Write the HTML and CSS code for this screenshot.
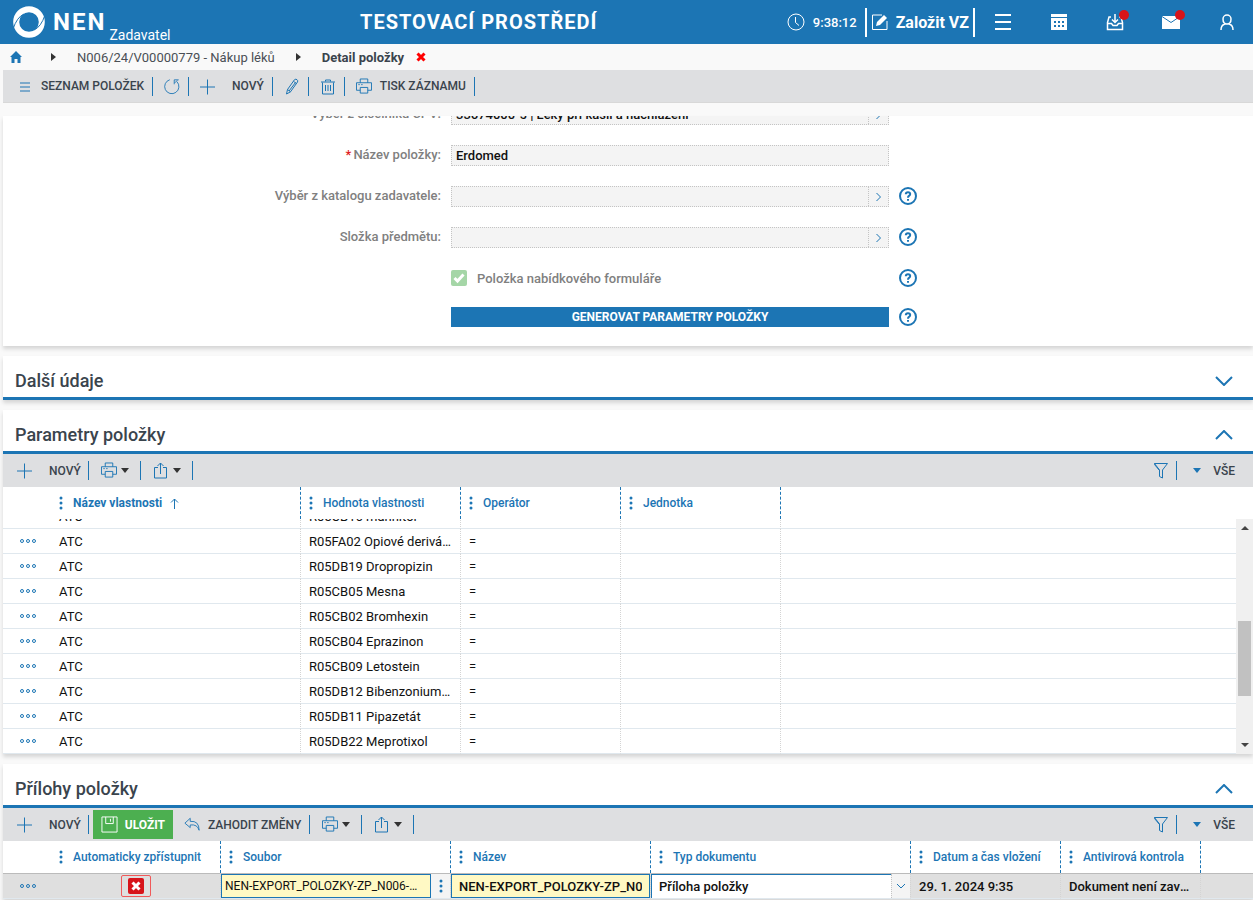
FILE: index.html
```html
<!DOCTYPE html>
<html lang="cs">
<head>
    <meta charset="UTF-8">
    <meta name="viewport" content="width=device-width, initial-scale=1.0">
    <title>NEN - Detail položky</title>
    <link rel="stylesheet" href="styles.css">
</head>
<body>
    <svg class="sprite" aria-hidden="true">
        <symbol id="i-list" viewBox="0 0 16 16"><path d="M3 4.500h10M3 8.500h10M3 12.500h10"/></symbol>
        <symbol id="i-refresh" viewBox="0 0 18 18"><path d="M6.500 1.400A8 8 0 1 0 14.500 3.500M16.500 1.500H11.500V6.500M15 2L12 5"/></symbol>
        <symbol id="i-plus" viewBox="0 0 16 16"><path d="M7.500 1v15M0 8.500h15"/></symbol>
        <symbol id="i-pencil" viewBox="0 0 16 16"><path d="M2.500 15.500l1-4.500L10.500 1.200q1.400-1 2.500 0 1.300 1 .5 2.300L6.500 13.300zM9.500 2.800l2.800 2.200M3.500 11l3 2.300M11.500 4L5 12.500"/></symbol>
        <symbol id="i-trash" viewBox="0 0 16 16"><path d="M1 3.500h14M5.500 3V1.500h5V3M2.500 4v11.500h11V4M5.500 6.500v6M8 6.500v6M10.500 6.500v6"/></symbol>
        <symbol id="i-print" viewBox="0 0 17 17"><path d="M4.500 4.500v-4h8v4M4.500 12.500h-4v-8h16v8h-4M4.500 9.500h8v6h-8zM2.500 6.500h1.500M5.500 6.500h1.500"/></symbol>
        <symbol id="i-share" viewBox="0 0 16 17"><path d="M5 5.500H1.500v10.500h12V5.500H10M7.500 12V1M4.500 4l3-3 3 3"/></symbol>
        <symbol id="i-filter" viewBox="0 0 16 17"><path d="M1.500 1.500h13L9.500 8v8l-3-1.500V8zM1.500 1.500v1l5 6"/></symbol>
        <symbol id="i-caret" viewBox="0 0 8 5"><path d="M0 0h8L4 5z"/></symbol>
        <symbol id="i-down" viewBox="0 0 18 10"><path d="M1 1l8 8 8-8"/></symbol>
        <symbol id="i-up" viewBox="0 0 18 10"><path d="M1 9l8-8 8 8"/></symbol>
        <symbol id="i-dots" viewBox="0 0 4 14"><circle cx="2" cy="2" r="1.500"/><circle cx="2" cy="7" r="1.500"/><circle cx="2" cy="12" r="1.500"/></symbol>
        <symbol id="i-more" viewBox="0 0 18 6"><circle cx="3" cy="3" r="1.500"/><circle cx="9" cy="3" r="1.500"/><circle cx="15" cy="3" r="1.500"/></symbol>
        <symbol id="i-help" viewBox="0 0 18 18"><circle cx="9" cy="9" r="8"/><path d="M6.800 7.200Q6.800 5.200 9 5.200T11.200 7.100Q11.200 8.200 10 8.900 9 9.500 9 10.700M9 12v1.700"/></symbol>
        <symbol id="i-next" viewBox="0 0 8 10"><path d="M1.500 1l4 4-4 4"/></symbol>
    </svg>

    <header class="topbar">
        <a class="logo" href="#">
            <svg width="34" height="34" viewBox="0 0 34 34"><circle class="ring" cx="17" cy="17" r="12.800"/><path class="swoosh" d="M1 24Q5 12 12 9M33 10Q29 22 22 25"/></svg>
            <strong>NEN</strong>
            <span>Zadavatel</span>
        </a>
        <div class="env">TESTOVACÍ PROSTŘEDÍ</div>
        <div class="clock">
            <svg width="18" height="18" viewBox="0 0 18 18"><circle cx="9" cy="9" r="8"/><path d="M8.500 4v5.500l3.500 3"/></svg>
            <span>9:38:12</span>
        </div>
        <button class="create" type="button">
            <svg width="18" height="18" viewBox="0 0 18 18"><path d="M11 2H1.500v14.500H16V8"/><path class="solid" d="M5 13l1-4 7-7 3 3-7 7z"/></svg>
            Založit VZ
        </button>
        <nav class="top-icons">
            <button type="button" aria-label="Menu"><svg width="18" height="18" viewBox="0 0 18 18"><path class="thick" d="M1 2h16M1 9h16M1 16h16"/></svg></button>
            <button type="button" aria-label="Kalendář"><svg width="18" height="18" viewBox="0 0 18 18"><path class="solid" d="M1 1h16v3H1zM1 5h16v12H1z"/><path class="hole" d="M4 8h2v2H4zM8 8h2v2H8zM12 8h2v2h-2zM4 12h2v2H4zM8 12h2v2H8zM12 12h2v2h-2z"/></svg></button>
            <button type="button" aria-label="Doručené"><svg width="18" height="18" viewBox="0 0 18 18"><path class="medium" d="M5 4H3L1.500 9.500v7h15v-7L15 4h-2M1.500 10.500h4l1.500 2h4l1.500-2h4M9 1v8M6 6.500l3 3 3-3"/></svg><i class="badge"></i></button>
            <button type="button" aria-label="Zprávy"><svg width="18" height="18" viewBox="0 0 18 18"><path class="solid" d="M0 3h18v13H0z"/><path class="fold" d="M0 3.500l9 6 9-6"/></svg><i class="badge"></i></button>
            <button type="button" aria-label="Uživatel"><svg width="18" height="18" viewBox="0 0 18 18"><path class="medium" d="M9 2a4 4 0 0 1 4 4q0 5-4 5T5 6a4 4 0 0 1 4-4zM3 17q0-5 4-6M15 17q0-5-4-6"/></svg></button>
        </nav>
    </header>

    <nav class="crumbs">
        <a class="home" href="#" aria-label="Domů"><svg width="12" height="12" viewBox="0 0 12 12"><path d="M6 0l6 6h-1.500v6H7.500V8h-3v4h-3V6H0z"/></svg></a>
        <svg class="crumb-arrow" width="5" height="8" viewBox="0 0 5 8"><path d="M0 0l5 4-5 4z"/></svg>
        <a href="#">N006/24/V00000779 - Nákup léků</a>
        <svg class="crumb-arrow" width="5" height="8" viewBox="0 0 5 8"><path d="M0 0l5 4-5 4z"/></svg>
        <strong>Detail položky</strong>
        <button class="close" type="button" aria-label="Zavřít"><svg width="10" height="10" viewBox="0 0 10 10"><path d="M1.500 1.500l7 7M8.500 1.500l-7 7"/></svg></button>
    </nav>

    <main>
        <div class="toolbar main-toolbar">
            <button type="button" class="near"><svg class="icon"><use href="#i-list"/></svg>SEZNAM POLOŽEK</button>
            <button type="button" aria-label="Obnovit"><svg class="icon"><use href="#i-refresh"/></svg></button>
            <button type="button"><svg class="icon"><use href="#i-plus"/></svg>NOVÝ</button>
            <button type="button" aria-label="Upravit"><svg class="icon"><use href="#i-pencil"/></svg></button>
            <button type="button" aria-label="Smazat"><svg class="icon"><use href="#i-trash"/></svg></button>
            <button type="button" class="near"><svg class="icon"><use href="#i-print"/></svg>TISK ZÁZNAMU</button>
        </div>

        <section class="card form-card">
            <form class="form">
                <label for="cpv">Výběr z číselníku CPV:</label>
                <div class="field">
                    <input id="cpv" type="text" value="33674000-5 | Léky při kašli a nachlazení" readonly>
                    <button type="button" aria-label="Vybrat"><svg width="8" height="10"><use href="#i-next"/></svg></button>
                </div>
                <span></span>

                <label for="nazev"><span class="required">*</span>Název položky:</label>
                <div class="field"><input id="nazev" type="text" value="Erdomed" readonly></div>
                <span></span>

                <label for="katalog">Výběr z katalogu zadavatele:</label>
                <div class="field">
                    <input id="katalog" type="text" readonly>
                    <button type="button" aria-label="Vybrat"><svg width="8" height="10"><use href="#i-next"/></svg></button>
                </div>
                <button class="help" type="button" aria-label="Nápověda"><svg width="18" height="18"><use href="#i-help"/></svg></button>

                <label for="slozka">Složka předmětu:</label>
                <div class="field">
                    <input id="slozka" type="text" readonly>
                    <button type="button" aria-label="Vybrat"><svg width="8" height="10"><use href="#i-next"/></svg></button>
                </div>
                <button class="help" type="button" aria-label="Nápověda"><svg width="18" height="18"><use href="#i-help"/></svg></button>

                <span></span>
                <div class="check">
                    <span class="tick">
                        <input id="nabidka" type="checkbox" checked>
                        <svg width="16" height="16" viewBox="0 0 16 16"><path d="M3.500 8l3 3 6-6.500"/></svg>
                    </span>
                    <label for="nabidka">Položka nabídkového formuláře</label>
                </div>
                <button class="help" type="button" aria-label="Nápověda"><svg width="18" height="18"><use href="#i-help"/></svg></button>

                <span></span>
                <button class="generate" type="button">GENEROVAT PARAMETRY POLOŽKY</button>
                <button class="help" type="button" aria-label="Nápověda"><svg width="18" height="18"><use href="#i-help"/></svg></button>
            </form>
        </section>

        <section class="card">
            <div class="card-head">
                <h2>Další údaje</h2>
                <button type="button" aria-label="Rozbalit"><svg width="18" height="10"><use href="#i-down"/></svg></button>
            </div>
        </section>

        <section class="card">
            <div class="card-head">
                <h2>Parametry položky</h2>
                <button type="button" aria-label="Sbalit"><svg width="18" height="10"><use href="#i-up"/></svg></button>
            </div>
            <div class="toolbar">
                <button type="button"><svg class="icon"><use href="#i-plus"/></svg>NOVÝ</button>
                <button type="button" class="drop" aria-label="Tisk"><svg class="icon"><use href="#i-print"/></svg><svg class="caret"><use href="#i-caret"/></svg></button>
                <button type="button" class="drop" aria-label="Export"><svg class="icon"><use href="#i-share"/></svg><svg class="caret"><use href="#i-caret"/></svg></button>
                <button type="button" class="filter" aria-label="Filtr"><svg class="icon"><use href="#i-filter"/></svg></button>
                <button type="button" class="all"><svg class="caret"><use href="#i-caret"/></svg>VŠE</button>
            </div>
            <table class="grid params">
                <colgroup><col class="w-menu"><col class="w-name"><col class="w-param"><col class="w-param"><col class="w-param"><col></colgroup>
                <thead>
                    <tr>
                        <td></td>
                        <th><svg class="dots"><use href="#i-dots"/></svg><b>Název vlastnosti</b><svg class="sort" width="9" height="11" viewBox="0 0 9 11"><path d="M4.500 11V1M1 4.500L4.500 1 8 4.500"/></svg></th>
                        <th><svg class="dots"><use href="#i-dots"/></svg>Hodnota vlastnosti</th>
                        <th><svg class="dots"><use href="#i-dots"/></svg>Operátor</th>
                        <th><svg class="dots"><use href="#i-dots"/></svg>Jednotka</th>
                        <td></td>
                    </tr>
                </thead>
            </table>
            <div class="scroller">
                <div class="rows">
                    <table class="grid params">
                        <colgroup><col class="w-menu"><col class="w-name"><col class="w-param"><col class="w-param"><col class="w-param"><col></colgroup>
                        <tbody>
                            <tr><td class="more"><svg><use href="#i-more"/></svg></td><td>ATC</td><td>R05CB16 mannitol</td><td>=</td><td></td><td></td></tr>
                            <tr><td class="more"><svg><use href="#i-more"/></svg></td><td>ATC</td><td>R05FA02 Opiové deriváty</td><td>=</td><td></td><td></td></tr>
                            <tr><td class="more"><svg><use href="#i-more"/></svg></td><td>ATC</td><td>R05DB19 Dropropizin</td><td>=</td><td></td><td></td></tr>
                            <tr><td class="more"><svg><use href="#i-more"/></svg></td><td>ATC</td><td>R05CB05 Mesna</td><td>=</td><td></td><td></td></tr>
                            <tr><td class="more"><svg><use href="#i-more"/></svg></td><td>ATC</td><td>R05CB02 Bromhexin</td><td>=</td><td></td><td></td></tr>
                            <tr><td class="more"><svg><use href="#i-more"/></svg></td><td>ATC</td><td>R05CB04 Eprazinon</td><td>=</td><td></td><td></td></tr>
                            <tr><td class="more"><svg><use href="#i-more"/></svg></td><td>ATC</td><td>R05CB09 Letostein</td><td>=</td><td></td><td></td></tr>
                            <tr><td class="more"><svg><use href="#i-more"/></svg></td><td>ATC</td><td>R05DB12 Bibenzonium-bromid</td><td>=</td><td></td><td></td></tr>
                            <tr><td class="more"><svg><use href="#i-more"/></svg></td><td>ATC</td><td>R05DB11 Pipazetát</td><td>=</td><td></td><td></td></tr>
                            <tr><td class="more"><svg><use href="#i-more"/></svg></td><td>ATC</td><td>R05DB22 Meprotixol</td><td>=</td><td></td><td></td></tr>
                        </tbody>
                    </table>
                </div>
                <div class="scrollbar">
                    <svg width="8" height="4" viewBox="0 0 8 4"><path d="M0 4h8L4 0z"/></svg>
                    <div class="track"><div class="thumb"></div></div>
                    <svg width="8" height="4" viewBox="0 0 8 4"><path d="M0 0h8L4 4z"/></svg>
                </div>
            </div>
        </section>

        <section class="card">
            <div class="card-head">
                <h2>Přílohy položky</h2>
                <button type="button" aria-label="Sbalit"><svg width="18" height="10"><use href="#i-up"/></svg></button>
            </div>
            <div class="toolbar">
                <button type="button"><svg class="icon"><use href="#i-plus"/></svg>NOVÝ</button>
                <button type="button" class="save"><svg class="icon" viewBox="0 0 18 18"><path d="M1 1h16v16H1zM5 1v7h8V1M10 3v3"/></svg>ULOŽIT</button>
                <button type="button" class="near"><svg class="icon" viewBox="0 0 18 16"><path d="M7 1L1 6.500l6 5V8.500q8-1 10 6 0-11-10-10z"/></svg>ZAHODIT ZMĚNY</button>
                <button type="button" class="drop" aria-label="Tisk"><svg class="icon"><use href="#i-print"/></svg><svg class="caret"><use href="#i-caret"/></svg></button>
                <button type="button" class="drop" aria-label="Export"><svg class="icon"><use href="#i-share"/></svg><svg class="caret"><use href="#i-caret"/></svg></button>
                <button type="button" class="filter" aria-label="Filtr"><svg class="icon"><use href="#i-filter"/></svg></button>
                <button type="button" class="all"><svg class="caret"><use href="#i-caret"/></svg>VŠE</button>
            </div>
            <table class="grid files">
                <colgroup><col class="w-menu"><col class="w-auto"><col class="w-file"><col class="w-title"><col class="w-type"><col class="w-date"><col class="w-av"><col></colgroup>
                <thead>
                    <tr>
                        <td></td>
                        <th><svg class="dots"><use href="#i-dots"/></svg>Automaticky zpřístupnit</th>
                        <th><svg class="dots"><use href="#i-dots"/></svg>Soubor</th>
                        <th><svg class="dots"><use href="#i-dots"/></svg>Název</th>
                        <th><svg class="dots"><use href="#i-dots"/></svg>Typ dokumentu</th>
                        <th><svg class="dots"><use href="#i-dots"/></svg>Datum a čas vložení</th>
                        <th><svg class="dots"><use href="#i-dots"/></svg>Antivirová kontrola</th>
                        <td></td>
                    </tr>
                </thead>
                <tbody>
                    <tr>
                        <td class="more"><svg><use href="#i-more"/></svg></td>
                        <td class="cell-check">
                            <span class="cross">
                                <input type="checkbox" aria-label="Automaticky zpřístupnit">
                                <svg width="16" height="16" viewBox="0 0 16 16"><path d="M4.500 4.500l7 7M11.500 4.500l-7 7"/></svg>
                            </span>
                        </td>
                        <td class="cell-edit"><div class="edit file"><input type="text" aria-label="Soubor" value="NEN-EXPORT_POLOZKY-ZP_N006-24-V00000779.xlsx"><button type="button" aria-label="Akce"><svg class="dots"><use href="#i-dots"/></svg></button></div></td>
                        <td class="cell-edit"><div class="edit name"><input type="text" aria-label="Název" value="NEN-EXPORT_POLOZKY-ZP_N006-24-V00000779"></div></td>
                        <td class="cell-edit"><div class="edit type"><select aria-label="Typ dokumentu"><option>Příloha položky</option></select><span class="arrow"><svg width="10" height="6" viewBox="0 0 10 6"><path d="M1 1l4 4 4-4"/></svg></span></div></td>
                        <td>29. 1. 2024 9:35</td>
                        <td>Dokument není zavirovaný</td>
                        <td></td>
                    </tr>
                </tbody>
            </table>
        </section>
    </main>
</body>
</html>
```

FILE: styles.css
```css
body {
    font-family: Roboto, 'Liberation Sans', sans-serif;
    font-size: 13px;
    color: #111;
    background-color: #f9f9f9;
    margin: 0;
    overflow: hidden;
}
* {
    box-sizing: border-box;
}
button,
input,
select {
    font: inherit;
    color: inherit;
    background: none;
    border: 0;
    border-radius: 0;
    margin: 0;
    padding: 0;
}
button {
    display: flex;
    align-items: center;
    justify-content: center;
    cursor: pointer;
}
a {
    color: inherit;
    text-decoration: none;
}
svg {
    display: block;
    flex: none;
    fill: none;
    stroke: #1c75b4;
}
.sprite {
    position: absolute;
    width: 0;
    height: 0;
}

/* top bar */
.topbar {
    display: flex;
    align-items: center;
    height: 44px;
    padding-left: 12px;
    color: #fff;
    background-color: #1c75b4;
}
.topbar svg {
    stroke: #fff;
}
.logo {
    display: flex;
    align-items: center;
    align-self: stretch;
}
.logo svg {
    margin-right: 7px;
}
.logo strong {
    font-size: 24px;
    font-weight: 700;
    letter-spacing: 2px;
}
.logo span {
    align-self: flex-end;
    font-size: 14px;
    line-height: 18px;
    margin-left: 3px;
}
.ring {
    stroke-width: 6;
}
.topbar .swoosh {
    stroke: #1c75b4;
}
.env {
    flex: 1;
    text-align: center;
    font-size: 20px;
    font-weight: 700;
    letter-spacing: 1px;
}
.clock {
    display: flex;
    align-items: center;
    gap: 8px;
    font-weight: 500;
    margin-right: 8px;
}
.create {
    height: 29px;
    padding: 0 4px;
    gap: 7px;
    font-size: 16px;
    font-weight: 700;
    border-left: 2px solid #fff;
    border-right: 2px solid #fff;
}
.topbar .solid {
    fill: #fff;
    stroke: none;
}
.topbar .hole {
    fill: #1c75b4;
    stroke: none;
}
.topbar .fold {
    stroke: #1c75b4;
}
.topbar .thick {
    stroke-width: 2;
}
.topbar .medium {
    stroke-width: 1.5;
}
.top-icons {
    display: flex;
    margin-right: -2px;
}
.top-icons button {
    position: relative;
    width: 56px;
    height: 44px;
}
.badge {
    position: absolute;
    top: 10px;
    right: 14px;
    width: 10px;
    height: 10px;
    border-radius: 50%;
    background-color: #d7141a;
}

/* breadcrumbs */
.crumbs {
    display: flex;
    align-items: center;
    height: 26px;
    padding-left: 10px;
    color: #4a4f55;
}
.crumbs strong {
    color: #3a444d;
}
.crumbs .home svg {
    fill: #1c75b4;
    stroke: none;
}
.crumb-arrow {
    fill: #333;
    stroke: none;
    margin: 0 21px;
}
.home + .crumb-arrow {
    margin-left: 29px;
}
.close {
    margin-left: 12px;
}
.close svg {
    stroke: #f00;
    stroke-width: 3;
}

main {
    margin-left: 3px;
}

/* toolbars */
.toolbar {
    display: flex;
    align-items: center;
    height: 33px;
    padding-left: 3px;
    background-color: #dedfe1;
}
.toolbar button {
    height: 19px;
    padding: 0 7px 0 11px;
    gap: 16px;
    font-size: 12px;
    font-weight: 500;
    color: #3a444d;
    border-right: 1px solid #1c75b4;
}
.main-toolbar button,
.toolbar .near {
    padding-right: 8px;
}
.toolbar .near {
    gap: 8px;
}
.toolbar .drop {
    gap: 4px;
    padding: 0 11px 0 12px;
}
.toolbar .filter {
    margin-left: auto;
}
.toolbar .all {
    padding: 0 18px 0 16px;
    gap: 12px;
    border-right: 0;
}
.toolbar .save {
    height: 29px;
    margin-left: 4px;
    padding: 0 8px;
    gap: 7px;
    color: #fff;
    font-weight: 700;
    background-color: #4caf50;
    border-right: 0;
}
.save .icon {
    stroke: #fff;
}
.icon {
    width: 16px;
    height: 17px;
}
.save .icon {
    width: 17px;
}
.caret {
    width: 8px;
    height: 5px;
    fill: #333;
    stroke: none;
}
.all .caret {
    fill: #1c75b4;
}
.main-toolbar {
    margin-bottom: 13px;
    border-bottom: 1px solid #d8d8d8;
}

/* cards */
.card {
    margin-bottom: 10px;
    background-color: #fff;
    box-shadow: 0 3px 4px rgba(0, 0, 0, 0.14);
}
.form-card {
    display: flex;
    flex-direction: column;
    justify-content: flex-end;
    height: 230px;
    overflow: hidden;
}
.card-head {
    display: flex;
    align-items: center;
    justify-content: space-between;
    height: 44px;
    padding: 8px 20px 0 12px;
    border-bottom: 3px solid #1c75b4;
}
.card-head svg {
    stroke-width: 2;
}
h2 {
    margin: 0;
    font-size: 18px;
    font-weight: 500;
    color: #3a444d;
}

/* form */
.form {
    display: grid;
    grid-template-columns: 438fr 438fr 354fr;
    column-gap: 10px;
    row-gap: 20px;
    align-items: start;
    padding-bottom: 16px;
}
.form > * {
    height: 21px;
}
.form label {
    color: #808080;
    font-weight: 500;
}
.form > label {
    text-align: right;
    line-height: 20px;
}
.required {
    color: #e01b22;
    margin-right: 2px;
}
.field {
    display: flex;
    background-color: #f4f4f4;
    border: 1px dotted #c4c4c4;
}
.field input {
    flex: 1;
    min-width: 0;
    padding-left: 4px;
    font-weight: 500;
}
.field button {
    width: 20px;
    border-left: 1px dotted #c4c4c4;
}
.help {
    justify-self: start;
}
.form .help {
    height: 20px;
}
.help svg {
    stroke-width: 2;
}
.check {
    display: flex;
    align-items: center;
    gap: 10px;
}
.form .check {
    height: 20px;
}
.tick,
.cross {
    display: grid;
    place-items: center;
}
.tick > *,
.cross > * {
    grid-area: 1 / 1;
}
.tick input,
.cross input {
    appearance: none;
    width: 16px;
    height: 16px;
    border-radius: 2px;
    background-color: #a5d6a7;
}
.tick svg,
.cross svg {
    stroke: #fff;
    stroke-width: 3;
    pointer-events: none;
}
.form .generate {
    height: 20px;
    color: #fff;
    font-size: 12px;
    font-weight: 700;
    background-color: #1c75b4;
}
.form .generate,
.generate + .help {
    margin-top: -2px;
}

/* tables */
.grid {
    width: 100%;
    table-layout: fixed;
    border-collapse: separate;
    border-spacing: 0;
}
.w-menu { width: 48px; }
.w-name { width: 250px; }
.w-param { width: 160px; }
.w-auto { width: 170px; }
.w-file { width: 230px; }
.w-title { width: 200px; }
.w-type { width: 260px; }
.w-date { width: 150px; }
.w-av { width: 140px; }
.grid thead td,
.grid th {
    height: 32px;
    padding: 0 8px;
}
.grid th {
    font-size: 12px;
    font-weight: 500;
    text-align: left;
    color: #1c75b4;
    border-right: 1px dashed #1c75b4;
}
.dots {
    display: inline-block;
    width: 4px;
    height: 14px;
    vertical-align: middle;
    fill: #1c75b4;
    stroke: none;
}
th .dots {
    margin-right: 10px;
}
.sort {
    display: inline-block;
    margin-left: 8px;
    vertical-align: middle;
}
.grid tbody td {
    height: 25px;
    padding: 0 8px;
    overflow: hidden;
    white-space: nowrap;
    text-overflow: ellipsis;
    border-right: 1px dotted #d4d4d4;
    border-bottom: 1px solid #e0e8ee;
}
.grid tbody .more,
.grid tbody td:last-child {
    border-right: 0;
}
.grid tbody .more {
    padding-left: 16px;
}
.more svg {
    width: 18px;
    height: 6px;
}
.scroller {
    display: flex;
    height: 235px;
    overflow: hidden;
}
.rows {
    flex: 1;
    display: flex;
    flex-direction: column;
    justify-content: flex-end;
}
.scrollbar {
    display: flex;
    flex-direction: column;
    align-items: center;
    justify-content: space-between;
    width: 17px;
    padding: 7px 2px;
    background-color: #f0f0f0;
}
.scrollbar svg {
    fill: #444;
    stroke: none;
}
.track {
    flex: 1;
    width: 13px;
    padding: 91px 0 47px;
}
.thumb {
    height: 100%;
    background-color: #c1c1c1;
}

/* attachments row in edit mode */
.files tbody td {
    font-weight: 500;
    background-color: #dfdfdf;
    border-top: 1px solid #bbb;
}
.grid tbody .cell-edit {
    padding: 0;
}
.cell-check .cross {
    width: 30px;
    height: 22px;
    margin: 0 auto;
    border: 1px solid #f05a5a;
    border-radius: 2px;
}
.cross input {
    background-color: #d7141a;
}
.edit {
    display: flex;
    height: 24px;
}
.edit input,
.edit select {
    flex: 1;
    min-width: 0;
    border: 1px solid #1c75b4;
}
.edit input {
    background-color: #fff9c4;
    text-overflow: ellipsis;
}
.edit.file input {
    padding: 0 9px 0 3px;
    font-size: 12px;
    font-weight: 400;
}
.edit.name input {
    padding: 0 7px;
    text-overflow: clip;
}
.edit select {
    appearance: none;
    padding: 0 7px;
    background-color: #fff;
    border-width: 1px 0 0 1px;
}
.edit button,
.edit .arrow {
    display: flex;
    align-items: center;
    justify-content: center;
    width: 19px;
    background-color: #f4f4f4;
}
.edit .arrow {
    border-left: 1px dotted #c4c4c4;
}
```
